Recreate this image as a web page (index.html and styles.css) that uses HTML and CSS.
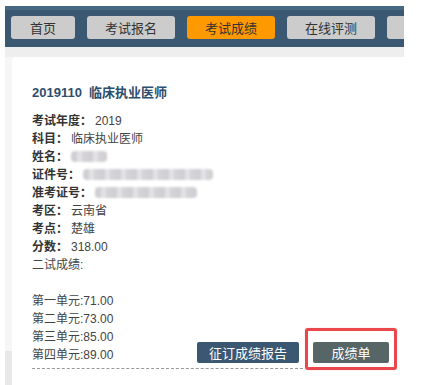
FILE: index.html
```html
<!DOCTYPE html>
<html lang="zh">
<head>
<meta charset="utf-8">
<link rel="stylesheet" href="styles.css">
</head>
<body>
<div class="page">
  <nav class="nav">
    <a class="nav-btn w64">首页</a>
    <a class="nav-btn">考试报名</a>
    <a class="nav-btn active">考试成绩</a>
    <a class="nav-btn">在线评测</a>
    <a class="nav-btn"></a>
  </nav>
  <div class="main">
    <div class="card">
      <h2 class="title">2019110&nbsp;&nbsp;临床执业医师</h2>
      <div class="body">
        <div class="info">
          <div class="row"><b>考试年度：</b>2019</div>
          <div class="row"><b>科目：</b>临床执业医师</div>
          <div class="row"><b>姓名：</b><span class="blur w36"></span></div>
          <div class="row"><b>证件号：</b><span class="blur w130"></span></div>
          <div class="row"><b>准考证号：</b><span class="blur w102"></span></div>
          <div class="row"><b>考区：</b>云南省</div>
          <div class="row"><b>考点：</b>楚雄</div>
          <div class="row"><b>分数：</b>318.00</div>
          <div class="row">二试成绩:</div>
          <div class="row empty"></div>
          <div class="row">第一单元:71.00</div>
          <div class="row">第二单元:73.00</div>
          <div class="row">第三单元:85.00</div>
          <div class="row">第四单元:89.00</div>
        </div>
        <div class="actions">
          <a class="btn btn-blue">征订成绩报告</a>
          <a class="btn btn-gray">成绩单<span class="mark"></span></a>
        </div>
      </div>
    </div>
  </div>
</div>
</body>
</html>
```

FILE: styles.css
```css
* { box-sizing: border-box; }
html, body { margin: 0; padding: 0; background: #fff; }
body {
  font-family: "Liberation Sans", "Noto Sans CJK SC", sans-serif;
  font-size: 12px;
  color: #333;
}
.page {
  width: 399px;
  margin: 6px 0 0 5px;
  height: 379px;
  overflow: hidden;
}
.nav {
  display: flex;
  gap: 12px;
  height: 41px;
  background: #3b5872;
  border-top: 4px solid #466883;
  padding: 6px 0 0 6px;
  overflow: hidden;
  white-space: nowrap;
}
.nav-btn {
  flex: 0 0 88px;
  height: 23px;
  line-height: 23px;
  text-align: center;
  background: #cccccc;
  border-radius: 3px;
  color: #333;
  font-family: "Noto Sans CJK SC", sans-serif;
  font-size: 13px;
  text-decoration: none;
}
.nav-btn.w64 { flex-basis: 64px; }
.nav-btn.active { background: #ff9900; }
.main {
  background: linear-gradient(to bottom, #eeeeee 0, #eeeeee 10px, #f6f6f6 10px, #f6f6f6 304px, #e8e8e8 304px);
  padding: 10px 0 0 7px;
  height: 338px;
}
.card {
  background: #fff;
  border-radius: 4px 0 0 0;
  height: 100%;
  padding: 27px 0 0 20px;
}
.title {
  margin: 0;
  font-size: 13px;
  line-height: 18px;
  font-weight: bold;
  color: #2d4e6c;
  font-family: "Liberation Sans", "Noto Sans CJK SC", sans-serif;
}
.body {
  display: grid;
  grid-template-columns: 165px 106px 86px;
  margin-top: 10px;
}
.info {
  grid-column: 1 / 3;
  grid-row: 1;
  border-bottom: 1px dashed #999;
  padding-bottom: 4px;
}
.row {
  height: 18px;
  line-height: 18px;
  white-space: nowrap;
  color: #444;
}
.row b { color: #333; font-weight: bold; margin-right: 3px; }
.blur {
  display: inline-block;
  vertical-align: middle;
  height: 11px;
  margin-top: -2px;
  border-radius: 4px;
  background: repeating-linear-gradient(to right, #cfcfd4 0, #cfcfd4 6px, #e2e2e6 6px, #e2e2e6 11px, #d6d2d6 11px, #d6d2d6 16px);
  filter: blur(1.2px);
}
.w36 { width: 36px; }
.w130 { width: 130px; }
.w102 { width: 102px; }
.actions {
  grid-column: 2 / 4;
  grid-row: 1;
  align-self: end;
  display: flex;
  gap: 14px;
  margin: 0 0 6px 0;
}
.btn {
  position: relative;
  height: 21px;
  line-height: 21px;
  text-align: center;
  color: #fff;
  border-radius: 2px;
  font-family: "Noto Sans CJK SC", sans-serif;
  font-size: 13px;
}
.btn-blue { width: 102px; background: #3b5872; }
.btn-gray { width: 76px; background: #566566; }
.mark {
  position: absolute;
  left: -8px;
  right: -8px;
  top: -14px;
  bottom: -7px;
  border: 3px solid #ea474d;
  border-radius: 3px;
  box-shadow: 0 0 1px rgba(234, 71, 77, 0.6);
}
```
